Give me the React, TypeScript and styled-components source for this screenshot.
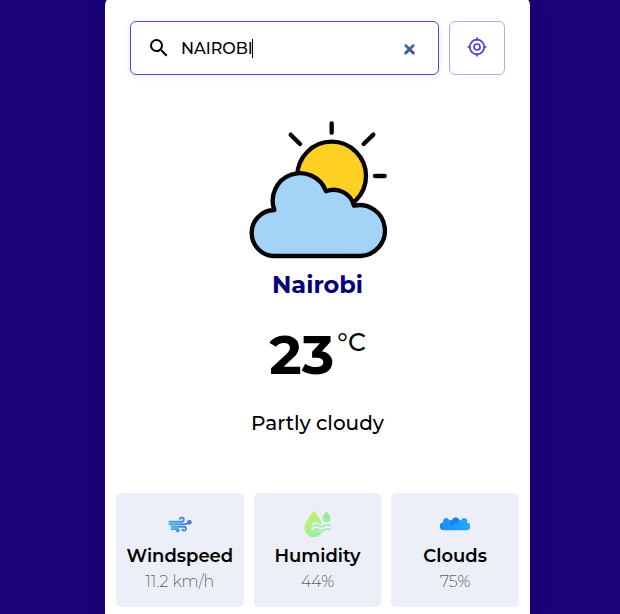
import React, { useState } from "react";
import styled, { createGlobalStyle } from "styled-components";

const GlobalStyle = createGlobalStyle`
  *, *::before, *::after { box-sizing: border-box; }
  body {
    margin: 0;
    background: #1a037a;
    color: #000;
    font-family: Montserrat, Inter, "Open Sans", sans-serif;
  }
  button, input { font: inherit; color: inherit; }
`;

const Page = styled.div`
  padding: 0 90px 0 105px;
  overflow: hidden;
`;

const Card = styled.main`
  margin-top: -3px;
  padding: 24px 11px 16px;
  background: #fff;
  border-radius: 8px;
  box-shadow: 0 0 20px rgba(0, 0, 0, 0.12);
`;

const SearchBar = styled.form`
  display: flex;
  gap: 10px;
  padding: 0 14px;
`;

const SearchField = styled.label`
  display: flex;
  flex: 1;
  align-items: center;
  min-width: 0;
  height: 54px;
  padding: 0 22px 0 16px;
  border: 1px solid #5c42df;
  border-radius: 6px;
  box-shadow: 0 1px 6px rgba(0, 0, 0, 0.1);
`;

const SearchInput = styled.input`
  field-sizing: content;
  min-width: 1px;
  max-width: 190px;
  margin-left: 10px;
  padding: 1px 0 0;
  border: 0;
  outline: 0;
  background: transparent;
  font-size: 16px;
  font-weight: 500;
  line-height: 20px;
  caret-color: transparent;
`;

const Caret = styled.span`
  width: 1px;
  height: 19px;
  margin-left: -1px;
  background: #000;
`;

const ClearButton = styled.button`
  display: flex;
  margin-left: auto;
  padding: 2px 0 0;
  border: 0;
  background: none;
  cursor: pointer;
`;

const LocateButton = styled.button`
  display: flex;
  align-items: center;
  justify-content: center;
  width: 56px;
  height: 54px;
  padding: 0 0 2px;
  border: 1px solid #b9a8f8;
  border-radius: 6px;
  background: #fff;
  color: #5c38df;
  cursor: pointer;
`;

const Current = styled.section`
  display: flex;
  flex-direction: column;
  align-items: center;
  padding-top: 45px;
`;

const City = styled.h1`
  margin: 10px 0 0;
  color: #03007c;
  font-size: 24px;
  font-weight: 700;
  line-height: 30px;
`;

const Temperature = styled.p`
  display: flex;
  align-items: flex-start;
  gap: 3px;
  margin: 21px 0 0;
  font-size: 55px;
  font-weight: 700;
  line-height: 68px;
`;

const Unit = styled.span`
  font-size: 25px;
  font-weight: 500;
  line-height: 42px;
`;

const Condition = styled.p`
  margin: 22px 0 0;
  font-size: 20px;
  font-weight: 500;
  line-height: 24px;
`;

const Stats = styled.dl`
  display: grid;
  grid-template-columns: repeat(3, 1fr);
  gap: 10px;
  margin: 58px 0 0;
`;

const Stat = styled.div`
  display: flex;
  flex-direction: column;
  align-items: center;
  height: 114px;
  padding-top: 16px;
  border-radius: 5px;
  background: #eceff7;
`;

const StatLabel = styled.dt`
  display: flex;
  flex-direction: column;
  align-items: center;
  gap: 5px;
  font-size: 18px;
  font-weight: 600;
  line-height: 24px;
`;

const StatValue = styled.dd`
  margin: 2px 0 0;
  color: #222;
  font-size: 16px;
  font-weight: 200;
  line-height: 24px;
`;

const SearchIcon = () => (
  <svg width="24" height="24" viewBox="0 0 24 24" aria-hidden="true">
    <path d="M15.5 14h-.79l-.28-.27A6.47 6.47 0 0 0 16 9.5 6.5 6.5 0 1 0 9.5 16c1.61 0 3.09-.59 4.23-1.57l.27.28v.79l5 4.99L20.49 19l-4.99-5zm-6 0C7.01 14 5 11.99 5 9.5S7.01 5 9.5 5 14 7.01 14 9.5 11.99 14 9.5 14z" />
  </svg>
);

const ClearIcon = () => (
  <svg width="14" height="14" viewBox="0 0 14 14" aria-hidden="true">
    <defs>
      <linearGradient id="clear-fill" x1="0" y1="0" x2="0" y2="14" gradientUnits="userSpaceOnUse">
        <stop offset="0" stopColor="#4d83bd" />
        <stop offset="1" stopColor="#274577" />
      </linearGradient>
    </defs>
    <path d="M3.7 3.5l7.6 7.4M11.3 3.5l-7.6 7.4" stroke="url(#clear-fill)" strokeWidth="2.8" strokeLinecap="round" />
  </svg>
);

const LocateIcon = () => (
  <svg width="20" height="20" viewBox="0 0 20 20" fill="none" stroke="currentColor" strokeWidth="1.7" aria-hidden="true">
    <circle cx="10" cy="10" r="7.3" />
    <circle cx="10" cy="10" r="3" />
    <path d="M10 .5v3M10 16.5v3M.5 10h3M16.5 10h3" />
  </svg>
);

const PartlyCloudyIcon = () => (
  <svg width="140" height="140" viewBox="24 30 420 420" stroke="#050505" strokeWidth="13" strokeLinecap="round" strokeLinejoin="round" role="img" aria-label="Partly cloudy">
    <circle cx="275" cy="198" r="103" fill="#fdd023" />
    <path d="M275 40v28M152 74l28 28M400 74l-29 28M405 198h29" fill="none" />
    <path d="M103 300A69 69 0 0 0 105 438H360A76.4 76.4 0 1 0 342 287A63 63 0 0 0 258 244A82.4 82.4 0 0 0 103 300Z" fill="#a3d3f7" />
  </svg>
);

const WindIcon = () => (
  <svg width="30" height="30" viewBox="0 0 30 30" fill="none" stroke="url(#wind-fill)" strokeWidth="1.9" strokeLinecap="round" aria-hidden="true">
    <defs>
      <linearGradient id="wind-fill" x1="3" y1="0" x2="27" y2="0" gradientUnits="userSpaceOnUse">
        <stop offset="0" stopColor="#38aedf" />
        <stop offset="1" stopColor="#4778d8" />
      </linearGradient>
    </defs>
    <path d="M4.4 12.8h12.2a2.1 2.1 0 1 0-1.8-3.1" />
    <path d="M4.4 15.3h15.4q1.8 0 3.4-1.4" />
    <path d="M6.5 17.8h12.6a1.9 1.9 0 1 1-1.7 2.7" />
    <path d="M6.5 20.1h6.2a1.1 1.1 0 1 1-1 1.4" />
    <circle cx="24.4" cy="13.3" r="1.4" fill="#4778d8" />
  </svg>
);

const HumidityIcon = () => (
  <svg width="30" height="30" viewBox="0 0 30 30" aria-hidden="true">
    <defs>
      <linearGradient id="drop-fill" x1="6" y1="4" x2="22" y2="27" gradientUnits="userSpaceOnUse">
        <stop offset="0" stopColor="#c8f36b" />
        <stop offset="1" stopColor="#91eca4" />
      </linearGradient>
    </defs>
    <path d="M11.8 1.6C8.8 5.9 2.5 12.8 2.5 18.9a9.2 9.2 0 0 0 18.4 0C20.9 12.8 14.8 5.9 11.8 1.6Z" fill="url(#drop-fill)" />
    <path d="M24.5 2c-1.5 2.1-4 4.6-4 7.2a4 4 0 0 0 8 0c0-2.6-2.5-5.1-4-7.2Z" fill="#9aeb98" />
    <path d="M22 9.5a2.5 2.5 0 0 0 2 2" fill="none" stroke="#eceff7" strokeWidth="1" />
    <path d="M10.5 17q2.5-2.8 5.2-.9t5.4.4 7.5-.7M10.5 21q2.5-2.8 5.2-.9t5.4.4 7.5-.7" fill="none" stroke="#eceff7" strokeWidth="4" />
    <path d="M11.5 17.4q2.2-2.8 4.8-.9t5.4.4 6.8-.7M11.5 21.6q2.2-2.8 4.8-.9t5.4.4 6.8-.7" fill="none" stroke="#a0edae" strokeWidth="1.8" />
  </svg>
);

const CloudsIcon = () => (
  <svg width="30" height="30" viewBox="0 0 30 30" aria-hidden="true">
    <defs>
      <linearGradient id="cloud-fill" x1="0" y1="0" x2="30" y2="0" gradientUnits="userSpaceOnUse">
        <stop offset="0" stopColor="#168cff" />
        <stop offset="1" stopColor="#26a8ff" />
      </linearGradient>
    </defs>
    <path d="M4 21.2A4 4 0 0 1 3.4 13.2 3 3 0 0 1 9 10.9Q10.8 11.6 12.3 11A3.6 3.6 0 0 1 19 10.5Q20.2 11.6 21.3 11A2.8 2.8 0 0 1 27 13.4 3.9 3.9 0 0 1 26.2 21.2Z" fill="url(#cloud-fill)" />
    <path d="M10.2 12.6a3 3 0 0 1 2.1-1.6A3.6 3.6 0 0 1 19 10.5l.3 1.2q-.9 2.5-4 3-2.7.5-3.4 3-2.5-2-1.7-5.1Z" fill="#177fff" />
  </svg>
);

const stats = [
  { label: "Windspeed", value: "11.2 km/h", Icon: WindIcon },
  { label: "Humidity", value: "44%", Icon: HumidityIcon },
  { label: "Clouds", value: "75%", Icon: CloudsIcon },
];

export default function App() {
  const [query, setQuery] = useState("NAIROBI");

  return (
    <>
      <GlobalStyle />
      <Page>
        <Card>
          <SearchBar onSubmit={(event: React.FormEvent) => event.preventDefault()}>
            <SearchField>
              <SearchIcon />
              <SearchInput
                aria-label="City"
                value={query}
                onChange={(event: React.ChangeEvent<HTMLInputElement>) => setQuery(event.target.value)}
              />
              <Caret />
              <ClearButton type="button" aria-label="Clear" onClick={() => setQuery("")}>
                <ClearIcon />
              </ClearButton>
            </SearchField>
            <LocateButton type="button" aria-label="Use my location">
              <LocateIcon />
            </LocateButton>
          </SearchBar>
          <Current>
            <PartlyCloudyIcon />
            <City>Nairobi</City>
            <Temperature>
              23<Unit>°C</Unit>
            </Temperature>
            <Condition>Partly cloudy</Condition>
          </Current>
          <Stats>
            {stats.map(({ label, value, Icon }) => (
              <Stat key={label}>
                <StatLabel>
                  <Icon />
                  {label}
                </StatLabel>
                <StatValue>{value}</StatValue>
              </Stat>
            ))}
          </Stats>
        </Card>
      </Page>
    </>
  );
}
